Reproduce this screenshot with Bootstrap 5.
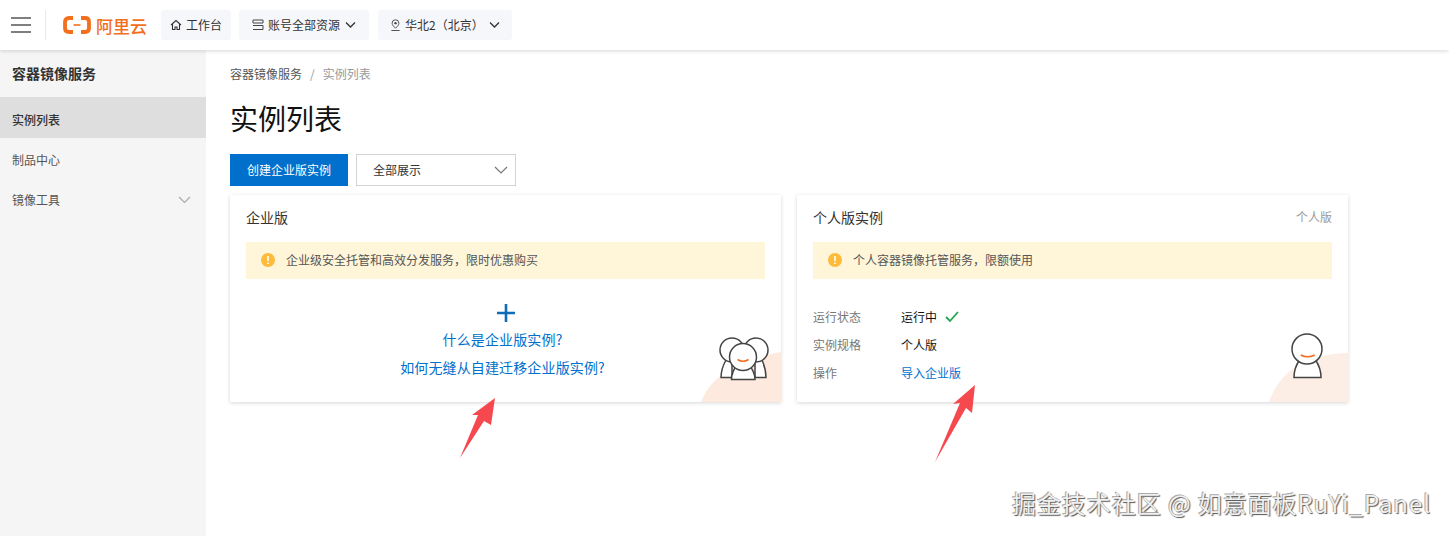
<!DOCTYPE html>
<html lang="zh-CN">
<head>
  <meta charset="UTF-8" />
  <meta name="viewport" content="width=device-width, initial-scale=1.0"/>
  <title>实例列表</title>
  <link href="https://cdn.jsdelivr.net/npm/bootstrap@5.3.2/dist/css/bootstrap.min.css" rel="stylesheet" />
  <style>
    html, body { height: 100%; }
    body {
      background: #fff;
      color: #333;
      font-family: "Noto Sans CJK SC", "Liberation Sans", sans-serif;
      font-size: 12px;
      overflow: hidden;
    }
    .top-bar {
      height: 50px;
      background: #fff;
      box-shadow: 0 1px 4px rgba(0, 0, 0, 0.16);
      padding: 0 0 0 11px;
      z-index: 2;
    }
    .menu-btn { width: 20px; height: 16px; margin-right: 14px; }
    .top-divider { width: 1px; height: 30px; background: #e8e8e8; margin-right: 17px; }
    .logo-text { color: #f36f1c; font-size: 17px; font-weight: 500; line-height: 1; margin: 0 14px 0 5px; }
    .top-chip {
      height: 30px;
      background: #f6f7fb;
      border-radius: 3px;
      color: #333;
      font-size: 12px;
      margin-right: 8px;
      padding: 0 9px;
      white-space: nowrap;
    }
    .chip-wide { padding: 0 13px; margin-right: 9px; }
    .chip-region { padding: 0 12px; margin-right: 0; }
    .chip-caret { margin-left: 1px; }
    .side-bar { width: 206px; height: 486px; background: #f5f5f5; flex: none; }
    .side-title { font-size: 14px; font-weight: 700; color: #333; padding: 13px 12px 0; height: 47px; line-height: 20px; }
    .side-link { color: #555; font-size: 12px; height: 40px; padding: 4px 15px 0 12px; }
    .side-link.is-active { background: #dedede; color: #333; font-weight: 500; height: 41px; }
    .main-area { padding: 16px 101px 0 24px; min-width: 0; }
    .breadcrumb { font-size: 12px; margin-bottom: 0; line-height: 16px; height: 16px; }
    .breadcrumb-item a { color: #555; text-decoration: none; }
    .breadcrumb-item.active { color: #999; }
    .breadcrumb-item + .breadcrumb-item::before { color: #999; }
    .page-title { font-size: 28px; font-weight: 400; color: #111; line-height: 40px; margin: 16px 0 16px; }
    .action-row { margin-bottom: 9px; }
    .btn-create {
      background: #0070cc;
      border: 0;
      border-radius: 0;
      color: #fff;
      font-size: 12px;
      height: 32px;
      width: 118px;
      padding: 0;
    }
    .scope-select {
      width: 160px;
      height: 32px;
      border: 1px solid #d4d4d4;
      border-radius: 0;
      color: #333;
      font-size: 12px;
      padding: 0 30px 0 16px;
      background-image: url("data:image/svg+xml,%3csvg xmlns='http://www.w3.org/2000/svg' viewBox='0 0 14 9'%3e%3cpath fill='none' stroke='%23777' stroke-width='1.2' d='M1 1l6 6 6-6'/%3e%3c/svg%3e");
      background-position: right 7px center;
      background-size: 14px 9px;
    }
    .inst-card {
      flex: 1 1 0;
      height: 207px;
      border: 0;
      border-radius: 0;
      box-shadow: 0 1px 4px rgba(0, 0, 0, 0.16);
      padding: 13px 16px 0;
      overflow: hidden;
    }
    .inst-head { font-size: 14px; color: #333; line-height: 18px; height: 18px; margin-bottom: 16px; }
    .inst-tag { font-size: 12px; color: #999; }
    .inst-alert {
      background: #fff5d9;
      border: 0;
      border-radius: 0;
      color: #555;
      font-size: 12px;
      height: 37px;
      margin: 0;
      padding: 0 15px 2px;
      gap: 11px;
    }
    .add-plus { margin-top: 25px; height: 18px; line-height: 0; }
    .inst-link { color: #0070cc; text-decoration: none; font-size: 14px; line-height: 20px; letter-spacing: 0.13px; }
    .link-stack { margin-top: 7px; gap: 8px; padding-right: 6px; }
    .info-rows { margin-top: 29px; gap: 10px; }
    .info-row { line-height: 18px; }
    .info-label { width: 88px; color: #777; }
    .info-value { color: #111; }
    .info-link { color: #0070cc; text-decoration: none; }
    .card-art { position: absolute; right: 0; bottom: 0; width: 80px; height: 70px; }
    .mark-arrow { position: absolute; left: 0; top: 0; width: 1449px; height: 536px; pointer-events: none; z-index: 3; }
    .wm-text {
      position: absolute;
      left: 1012px;
      top: 486px;
      font-size: 24px;
      line-height: 34px;
      letter-spacing: 0.93px;
      color: #f0f0f0;
      text-shadow: 1px 1px 1px #555, -1px -1px 0 #aaa;
      white-space: nowrap;
      z-index: 4;
    }
  </style>
</head>
<body>
  <nav class="top-bar d-flex align-items-center position-relative">
    <svg class="menu-btn" viewBox="0 0 20 16"><path d="M0 1h20M0 8h20M0 15h20" stroke="#555" stroke-width="1.6" fill="none"/></svg>
    <span class="top-divider"></span>
    <svg width="28" height="18" viewBox="0 0 28 18"><path d="M10 2H6Q2 2 2 6V12Q2 16 6 16H10M18 2H22Q26 2 26 6V12Q26 16 22 16H18" stroke="#f36f1c" stroke-width="3.8" fill="none"/><path d="M10.5 9h7" stroke="#f36f1c" stroke-width="1.6"/></svg>
    <span class="logo-text">阿里云</span>
    <a class="top-chip d-flex align-items-center gap-1 text-decoration-none">
      <svg width="12" height="12" viewBox="0 0 12 12"><path d="M1 6L6 1.5 11 6M2.500 5v5.500H5V8h2v2.500h2.500V5" stroke="#333" stroke-width="1.100" fill="none"/></svg>
      工作台
    </a>
    <a class="top-chip chip-wide d-flex align-items-center gap-1 text-decoration-none">
      <svg width="12" height="12" viewBox="0 0 12 12"><path d="M1 1h10v3H1zM1 6.500h10v4H1" stroke="#444" stroke-width="1" fill="none"/></svg>
      账号全部资源
      <svg class="chip-caret" width="11" height="8" viewBox="0 0 11 8"><path d="M1 1.500l4.500 4.500 4.500-4.500" stroke="#333" stroke-width="1.300" fill="none"/></svg>
    </a>
    <a class="top-chip chip-region d-flex align-items-center gap-1 text-decoration-none">
      <svg width="11" height="14" viewBox="0 0 12 14"><path d="M6 10.500C4 8.500 2.300 7 2.300 5a3.700 3.700 0 0 1 7.400 0C9.700 7 8 8.500 6 10.500z" stroke="#444" fill="none"/><circle cx="6" cy="5" r="1.300" fill="#444"/><path d="M1.500 13h9" stroke="#444"/></svg>
      华北2（北京）
      <svg class="chip-caret" width="11" height="8" viewBox="0 0 11 8"><path d="M1 1.500l4.500 4.500 4.500-4.500" stroke="#333" stroke-width="1.300" fill="none"/></svg>
    </a>
  </nav>

  <div class="d-flex">
    <aside class="side-bar">
      <div class="side-title">容器镜像服务</div>
      <nav class="nav flex-column">
        <a class="nav-link side-link is-active d-flex align-items-center">实例列表</a>
        <a class="nav-link side-link d-flex align-items-center">制品中心</a>
        <a class="nav-link side-link d-flex align-items-center justify-content-between">镜像工具
          <svg width="13" height="8" viewBox="0 0 13 8"><path d="M1 1l5.500 5.500L12 1" stroke="#aaa" stroke-width="1.200" fill="none"/></svg>
        </a>
      </nav>
    </aside>

    <main class="main-area flex-grow-1">
      <ol class="breadcrumb">
        <li class="breadcrumb-item"><a href="#">容器镜像服务</a></li>
        <li class="breadcrumb-item active">实例列表</li>
      </ol>
      <h1 class="page-title">实例列表</h1>
      <div class="d-flex gap-2 action-row">
        <button class="btn btn-create">创建企业版实例</button>
        <select class="form-select scope-select"><option>全部展示</option></select>
      </div>

      <div class="d-flex gap-3">
        <section class="card inst-card">
          <div class="inst-head">企业版</div>
          <div class="alert inst-alert d-flex align-items-center">
            <svg width="14" height="14" viewBox="0 0 14 14"><circle cx="7" cy="7" r="7" fill="#fdbb3c"/><path d="M7 3v5M7 9.600v1.500" stroke="#fff" stroke-width="1.600"/></svg>
            <span>企业级安全托管和高效分发服务，限时优惠购买</span>
          </div>
          <div class="add-plus text-center">
            <svg width="18" height="18" viewBox="0 0 18 18"><path d="M9 0v18M0 9h18" stroke="#0f6db8" stroke-width="2.600"/></svg>
          </div>
          <div class="link-stack d-flex flex-column align-items-center">
            <a class="inst-link" href="#">什么是企业版实例?</a>
            <a class="inst-link" href="#">如何无缝从自建迁移企业版实例?</a>
          </div>
          <svg class="card-art" viewBox="0 0 80 70">
            <path d="M0 70Q14 32 80 20V70Z" fill="#fde9dd"/>
            <g fill="#fff" stroke="#444" stroke-width="1.500">
              <path d="M25 28Q20 37 20 45.500H31V28M61 28Q65 37 65 45.500H54V28"/>
              <circle cx="31" cy="18" r="12"/>
              <circle cx="55" cy="18" r="12"/>
              <path d="M36 33Q30.500 40 30.500 47.500H54Q54 40 48 33"/>
              <circle cx="42" cy="25" r="13.500"/>
            </g>
            <path d="M36.500 27.500q5.500 3.500 11 0" stroke="#f36f1c" stroke-width="1.600" fill="none"/>
          </svg>
        </section>

        <section class="card inst-card">
          <div class="inst-head d-flex justify-content-between">
            <span>个人版实例</span>
            <span class="inst-tag">个人版</span>
          </div>
          <div class="alert inst-alert d-flex align-items-center">
            <svg width="14" height="14" viewBox="0 0 14 14"><circle cx="7" cy="7" r="7" fill="#fdbb3c"/><path d="M7 3v5M7 9.600v1.500" stroke="#fff" stroke-width="1.600"/></svg>
            <span>个人容器镜像托管服务，限额使用</span>
          </div>
          <div class="info-rows d-flex flex-column">
            <div class="info-row d-flex align-items-center">
              <span class="info-label">运行状态</span>
              <span class="info-value">运行中</span>
              <svg class="ms-2" width="14" height="12" viewBox="0 0 14 12"><path d="M1 6l4 4 8-9" stroke="#1fa84f" stroke-width="1.800" fill="none"/></svg>
            </div>
            <div class="info-row d-flex">
              <span class="info-label">实例规格</span>
              <span class="info-value">个人版</span>
            </div>
            <div class="info-row d-flex">
              <span class="info-label">操作</span>
              <a class="info-link" href="#">导入企业版</a>
            </div>
          </div>
          <svg class="card-art" viewBox="0 0 80 70">
            <path d="M1 70Q18 22 80 21V70Z" fill="#fdeee5"/>
            <g fill="#fff" stroke="#444" stroke-width="1.500">
              <path d="M31.500 28Q26 36 26 45.500H53Q53 36 47.500 28"/>
              <circle cx="39" cy="17" r="15"/>
            </g>
            <path d="M32.700 23q7 3.500 14 0" stroke="#f36f1c" stroke-width="1.600" fill="none"/>
          </svg>
        </section>
      </div>
    </main>
  </div>

  <svg class="mark-arrow" viewBox="0 0 1449 536">
    <polygon points="495,398 491,425 484,421 460,458 478,415 472,415" fill="#f5494f"/>
    <polygon points="975,385 972,413 966,408 935,462 960,403 953,404" fill="#f5494f"/>
  </svg>
  <div class="wm-text">掘金技术社区 @ 如意面板RuYi_Panel</div>

  <script src="https://cdn.jsdelivr.net/npm/bootstrap@5.3.2/dist/js/bootstrap.bundle.min.js"></script>
</body>
</html>
